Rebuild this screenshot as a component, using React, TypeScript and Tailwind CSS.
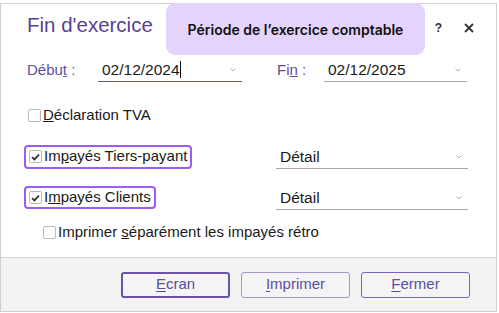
import React from "react";

const Check = ({ checked }: { checked?: boolean }) => (
  <span className="w-[13px] h-[13px] border border-[#b9b9b9] rounded-[2px] bg-white flex items-center justify-center shrink-0">
    {checked && (
      <svg width="9" height="8" viewBox="0 0 9 8">
        <path d="M1 4.2 L3.4 6.4 L8 1.6" stroke="#333" strokeWidth="1.8" fill="none" />
      </svg>
    )}
  </span>
);

const Arrow = () => (
  <svg width="6" height="4" viewBox="0 0 6 4" className="shrink-0">
    <path d="M0.5 0.5 L3 3 L5.5 0.5" stroke="#b0b0b0" strokeWidth="1" fill="none" />
  </svg>
);

const Select = ({ value }: { value: string }) => (
  <div className="flex items-center justify-between h-[24px] pl-[4px] pr-[6px] border-b border-[#a9a9a9]">
    <span className="text-[15.5px] text-[#1a1a1a]">{value}</span>
    <Arrow />
  </div>
);

const Btn = ({ first, rest, strong, light }: { first: string; rest: string; strong?: boolean; light?: boolean }) => (
  <button
    className={`w-[109px] h-[26px] rounded-[3px] bg-[#f4f4f4] text-[15px] text-[#5a4fa0] flex items-center justify-center ${
      strong ? "border-2 border-[#6c52a8]" : light ? "border-[1.5px] border-[#a995cc]" : "border-[1.5px] border-[#7b62b8]"
    }`}
  >
    <span className="underline underline-offset-2">{first}</span>
    {rest}
  </button>
);

export default function App() {
  return (
    <div className="w-[499px] h-[313px] bg-white pt-[3px] font-['Liberation_Sans',Arial,sans-serif]">
      <div className="relative w-[497px] h-[309px] border border-[#d0d0d0] flex flex-col">
        <div className="h-[46px] flex items-start justify-between pl-[26px] pr-[22px] pt-[9px]">
          <h1 className="text-[20.5px] leading-[24px] text-[#5b3f93]">Fin d'exercice</h1>
          <div className="flex items-center gap-[22px] pt-[6px] text-[#333]">
            <span className="text-[12px] font-bold">?</span>
            <svg width="10" height="10" viewBox="0 0 10 10">
              <path d="M1 1 L9 9 M9 1 L1 9" stroke="#333" strokeWidth="1.8" />
            </svg>
          </div>
        </div>

        <div className="absolute left-[165px] top-[-1px] w-[259px] h-[52px] rounded-[9px] bg-[#e4d4fc] flex items-center justify-center">
          <span className="font-['Inter',sans-serif] font-semibold text-[14px] text-[#111]">
            Période de l’exercice comptable
          </span>
        </div>

        <div className="flex-1 flex flex-col pl-[23px] pr-[28px]">
          <div className="mt-[9px] flex items-center text-[15px] text-[#5d4e9e]">
            <span className="w-[74px] pl-[3px]">
              Débu<span className="underline">t</span> :
            </span>
            <div className="w-[144px]">
              <div className="flex items-center justify-between h-[23px] pl-[4px] pr-[6px] border-b border-[#6b4fae]">
                <span className="text-[15.5px] text-[#1a1a1a]">
                  02/12/2024<span className="inline-block w-px h-[17px] bg-[#111] align-[-3px]" />
                </span>
                <Arrow />
              </div>
            </div>
            <span className="w-[47px] ml-[35px]">
              Fi<span className="underline">n</span> :
            </span>
            <div className="w-[143px]">
              <div className="flex items-center justify-between h-[23px] pl-[4px] pr-[6px] border-b border-[#a9a9a9]">
                <span className="text-[15.5px] text-[#1a1a1a]">02/12/2025</span>
                <Arrow />
              </div>
            </div>
          </div>

          <label className="mt-[23px] ml-[4px] flex items-center gap-[2px] text-[15px] text-[#1a1a1a] h-[20px]">
            <Check />
            <span>
              <span className="underline">D</span>éclaration TVA
            </span>
          </label>

          <div className="mt-[19px] flex items-center justify-between">
            <label className="h-[24px] flex items-center gap-[2px] px-[3px] border-2 border-[#9d5df3] rounded-[4px] text-[15px] text-[#1a1a1a]">
              <Check checked />
              <span>
                Im<span className="underline">p</span>ayés Tiers-payant
              </span>
            </label>
            <div className="w-[192px] mt-[1px]">
              <Select value="Détail" />
            </div>
          </div>

          <div className="mt-[16px] flex items-center justify-between">
            <label className="h-[23px] flex items-center gap-[2px] px-[3px] border-2 border-[#9d5df3] rounded-[4px] text-[15px] text-[#1a1a1a]">
              <Check checked />
              <span>
                I<span className="underline">m</span>payés Clients
              </span>
            </label>
            <div className="w-[192px] mt-[1px]">
              <Select value="Détail" />
            </div>
          </div>

          <label className="mt-[12px] ml-[19px] flex items-center gap-[2px] text-[15px] text-[#1a1a1a] h-[20px]">
            <Check />
            <span>
              Imprimer <span className="underline">s</span>éparément les impayés rétro
            </span>
          </label>
        </div>

        <div className="h-[54px] bg-[#f3f3f3] border-t border-[#d0d0d0] flex items-center justify-end gap-[11px] pr-[26px]">
          <Btn first="E" rest="cran" strong />
          <Btn first="I" rest="mprimer" light />
          <Btn first="F" rest="ermer" />
        </div>
      </div>
    </div>
  );
}
